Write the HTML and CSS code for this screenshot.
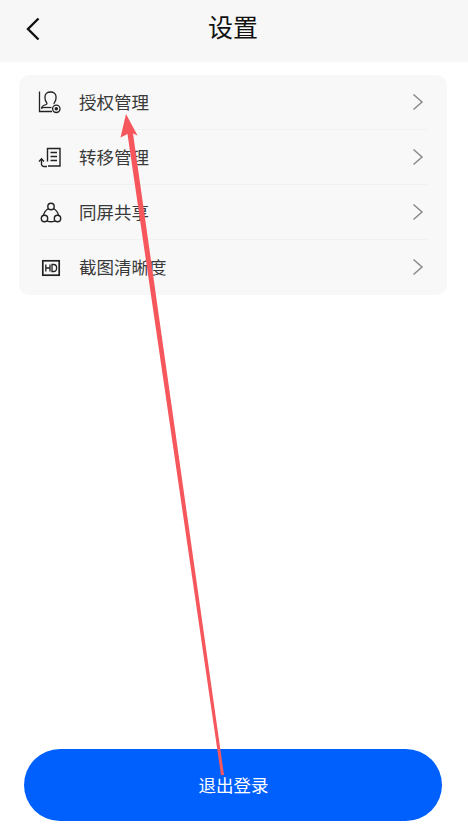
FILE: index.html
```html
<!DOCTYPE html>
<html lang="zh-CN">
<head>
<meta charset="utf-8">
<title>设置</title>
<link rel="stylesheet" href="styles.css">
</head>
<body>
<div class="page">
  <header class="topbar">
    <svg class="back" width="16" height="26" viewBox="0 0 16 26"><path d="M13.5 2.500 3 13l10.500 10.500" fill="none" stroke="#111" stroke-width="2.400"/></svg>
    <h1 class="title">设置</h1>
  </header>
  <main class="content">
    <ul class="card">
      <li class="row">
        <svg class="icon" width="24" height="24" viewBox="0 0 24 24" fill="none" stroke="#222" stroke-width="1.300"><path d="M1.500 1.500v20h12.500"/><path d="M3.800 19v-1.500c0-1 .7-1.500 1.800-2l2.500-1c1-.5 1-1.500.3-2.300C7.300 11 7 9.500 7 8V6.500C7 4 9.300 2 12.500 2S18 4 18 6.500V8c0 1.500-.4 3-1.400 4.200-.7.8-.7 1.300-.3 1.800"/><path d="M3.800 17.500h9.700"/><circle cx="18.300" cy="18.800" r="3.700"/><circle cx="18.300" cy="18.800" r="1.100" fill="#222"/></svg>
        <span class="label">授权管理</span>
        <svg class="chev" width="12" height="18" viewBox="0 0 12 18"><path d="M1.500 1.500 10 9l-8.500 7.500" fill="none" stroke="#8a8a8a" stroke-width="1.500"/></svg>
      </li>
      <li class="row">
        <svg class="icon" width="24" height="24" viewBox="0 0 24 24" fill="none" stroke="#222" stroke-width="1.400"><path d="M9.500 16.500V3.500h12.500v17.500H10"/><path d="M12.500 7.500h6.500M12.500 11.500h6.500M12.500 15.500h6.500"/><path d="M9 21.500H6a2.500 2.500 0 0 1-2.500-2.500v-5"/><path d="M1 16.500 3.500 13.800 6 16.500"/></svg>
        <span class="label">转移管理</span>
        <svg class="chev" width="12" height="18" viewBox="0 0 12 18"><path d="M1.500 1.500 10 9l-8.500 7.500" fill="none" stroke="#8a8a8a" stroke-width="1.500"/></svg>
      </li>
      <li class="row">
        <svg class="icon" width="24" height="24" viewBox="0 0 24 24" fill="none" stroke="#222" stroke-width="1.400"><circle cx="13" cy="6.500" r="3.200"/><circle cx="6.500" cy="18.500" r="3.200"/><circle cx="19.500" cy="18.500" r="3.200"/><path d="M10.500 8.500C8 10 6 12.500 5.500 15.400M15.500 8.500C18 10 20 12.500 20.500 15.400M9 20.800c2.500 1.200 5.500 1.200 8 0"/></svg>
        <span class="label">同屏共享</span>
        <svg class="chev" width="12" height="18" viewBox="0 0 12 18"><path d="M1.500 1.500 10 9l-8.500 7.500" fill="none" stroke="#8a8a8a" stroke-width="1.500"/></svg>
      </li>
      <li class="row">
        <svg class="icon" width="24" height="24" viewBox="0 0 24 24" fill="none" stroke="#222" stroke-width="1.700"><rect x="4.800" y="5.800" width="16.400" height="14.400"/><path d="M7.800 9.500v7M12 9.500v7M7.800 13H12" stroke-width="1.300"/><path d="M14 9.500v7h1.700c1.800 0 2.900-1.400 2.900-3.500s-1.100-3.500-2.900-3.500z" stroke-width="1.300"/></svg>
        <span class="label">截图清晰度</span>
        <svg class="chev" width="12" height="18" viewBox="0 0 12 18"><path d="M1.500 1.500 10 9l-8.500 7.500" fill="none" stroke="#8a8a8a" stroke-width="1.500"/></svg>
      </li>
    </ul>
  </main>
  <footer class="actions">
    <button class="logout" type="button">退出登录</button>
  </footer>
  <svg class="annotation" width="468" height="834" viewBox="0 0 468 834"><path d="M126 114 137.500 135.500 133 133.500 224 775 221 775 127.500 134 120.500 137.500z" fill="#f6575d"/></svg>
</div>
</body>
</html>
```
FILE: styles.css
```css
* { box-sizing: border-box; }
html, body { margin: 0; padding: 0; background: #fff; }
body { font-family: "Noto Sans CJK SC", "Liberation Sans", sans-serif; color: #333; }
.page { position: relative; width: 468px; height: 834px; display: flex; flex-direction: column; overflow: hidden; }
.topbar { height: 62px; flex: none; background: #f7f7f7; display: flex; align-items: center; justify-content: center; position: relative; }
.back { position: absolute; left: 25px; top: 16px; }
.title { margin: 0 2px 0 0; font-size: 25px; line-height: 34px; font-weight: 400; color: #111; position: relative; top: -5px; }
.content { flex: 1; padding: 13px 21px 0 19px; }
.card { list-style: none; margin: 0; padding: 0 20px 0 21px; background: #f8f8f9; border-radius: 10px; }
.row { height: 55px; display: flex; align-items: center; border-bottom: 1px solid #f1f1f2; }
.row:last-child { border-bottom-color: transparent; }
.icon { flex: none; margin-right: 17px; margin-left: -2px; }
.label { flex: 1; font-size: 17.500px; line-height: 24px; color: #3a3a3a; }
.chev { flex: none; margin-right: 3px; }
.actions { flex: none; padding: 0 26px 13px 24px; }
.logout { display: block; width: 100%; height: 72px; border: 0; border-radius: 36px; background: #0060fe; color: #fff; font-family: inherit; font-size: 17.500px; padding: 0 0 2px 1px; }
.annotation { position: absolute; left: 0; top: 0; pointer-events: none; }
```
